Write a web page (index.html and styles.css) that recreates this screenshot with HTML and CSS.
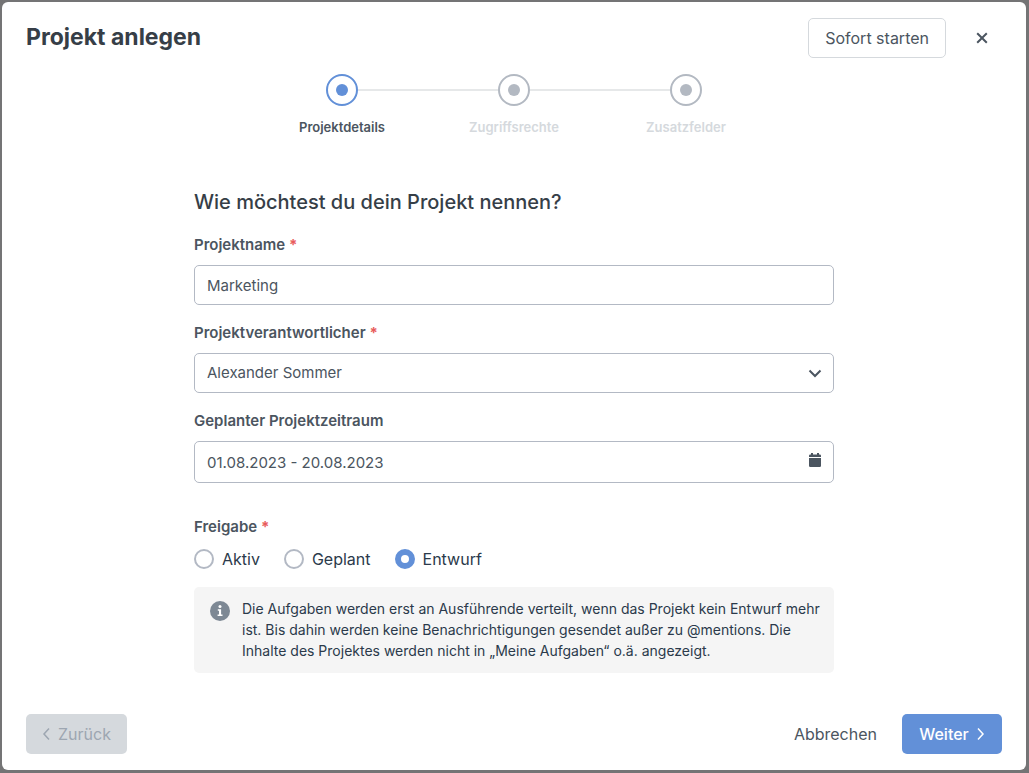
FILE: index.html
```html
<!DOCTYPE html>
<html lang="de">
<head>
    <meta charset="UTF-8">
    <meta name="viewport" content="width=device-width, initial-scale=1.0">
    <title>Projekt anlegen</title>
    <link rel="stylesheet" href="styles.css">
</head>
<body>
    <div class="modal" role="dialog" aria-labelledby="modal-title">
        <header class="modal-header">
            <h1 id="modal-title">Projekt anlegen</h1>
            <button type="button" class="btn btn-outline">Sofort starten</button>
            <button type="button" class="btn btn-close" aria-label="Schließen">
                <svg width="12" height="12" viewBox="0 0 12 12"><path d="M1.200 1.200l9.600 9.600M10.800 1.200l-9.600 9.600"/></svg>
            </button>
        </header>

        <ol class="steps">
            <li class="step active" aria-current="step"><span class="step-dot"></span>Projektdetails</li>
            <li class="step"><span class="step-dot"></span>Zugriffsrechte</li>
            <li class="step"><span class="step-dot"></span>Zusatzfelder</li>
        </ol>

        <form class="project-form" id="project-form">
            <h2>Wie möchtest du dein Projekt nennen?</h2>

            <div class="form-group">
                <label for="project-name">Projektname <span class="required">*</span></label>
                <input type="text" id="project-name" value="Marketing">
            </div>

            <div class="form-group">
                <label for="project-owner">Projektverantwortlicher <span class="required">*</span></label>
                <div class="control">
                    <select id="project-owner">
                        <option selected>Alexander Sommer</option>
                    </select>
                    <svg class="control-icon chevron" width="14" height="14" viewBox="0 0 14 14"><path d="M1.500 4.500L7 10l5.500-5.500"/></svg>
                </div>
            </div>

            <div class="form-group period">
                <label for="project-period">Geplanter Projektzeitraum</label>
                <div class="control">
                    <input type="text" id="project-period" value="01.08.2023 - 20.08.2023">
                    <svg class="control-icon calendar" width="14" height="16" viewBox="0 0 14 16">
                        <path d="M1 5V3.700Q1 2.500 2.200 2.500H3V1h2v1.500h4V1h2v1.500h.8Q13 2.500 13 3.700V5z"/>
                        <path d="M1 6h12v7.800q0 1.200-1.200 1.200H2.200Q1 15 1 13.800z"/>
                    </svg>
                </div>
            </div>

            <fieldset class="release">
                <legend>Freigabe <span class="required">*</span></legend>
                <div class="radios">
                    <label><input type="radio" name="release"> Aktiv</label>
                    <label><input type="radio" name="release"> Geplant</label>
                    <label><input type="radio" name="release" checked> Entwurf</label>
                </div>
            </fieldset>

            <div class="info">
                <svg width="20" height="20" viewBox="0 0 20 20">
                    <circle cx="10" cy="10" r="10" fill="#7d8894"/>
                    <circle cx="10" cy="5.600" r="1.500" fill="#fff"/>
                    <path d="M7.800 8.300h3.300v5.200h1.400V15H7.600v-1.500H9V9.800H7.800z" fill="#fff"/>
                </svg>
                <p>Die Aufgaben werden erst an Ausführende verteilt, wenn das Projekt kein Entwurf mehr ist. Bis dahin werden keine Benachrichtigungen gesendet außer zu @mentions. Die Inhalte des Projektes werden nicht in „Meine Aufgaben“ o.ä. angezeigt.</p>
            </div>
        </form>

        <footer class="modal-footer">
            <button type="button" class="btn btn-back" disabled>
                <svg width="8" height="14" viewBox="0 0 8 14"><path d="M7 1.500L2 7l5 5.500"/></svg>
                Zurück
            </button>
            <button type="button" class="btn btn-cancel">Abbrechen</button>
            <button type="submit" form="project-form" class="btn btn-primary">
                Weiter
                <svg width="8" height="14" viewBox="0 0 8 14"><path d="M1 1.500L6 7l-5 5.500"/></svg>
            </button>
        </footer>
    </div>
</body>
</html>
```

FILE: styles.css
```css
:root {
    --backdrop: #747475;
    --heading-color: #363e47;
    --text-color: #4b5560;
    --dark-color: #2b3a4b;
    --border-color: #b3b9c4;
    --light-color: #d5d9dd;
    --primary-color: #6290d8;
    --danger-color: #e85b5b;
    --font-main: Inter, "Noto Sans", sans-serif;
}
* { box-sizing: border-box; }
body {
    margin: 0;
    padding: 2px 3px 3px 2px;
    min-height: 100vh;
    display: flex;
    background: var(--backdrop);
    color: var(--text-color);
    font-family: var(--font-main);
    font-size: 15px;
    line-height: 20px;
}
button, input, select { font: inherit; color: inherit; }

.modal {
    flex: 1;
    display: flex;
    flex-direction: column;
    padding: 16px 24px;
    background: #fff;
    border-radius: 6px;
}
.modal-header {
    display: flex;
    gap: 16px;
}
h1 {
    flex: 1;
    margin: 0;
    color: var(--heading-color);
    font-size: 23px;
    font-weight: 700;
    line-height: 38px;
}

/* Buttons */
.btn {
    display: flex;
    align-items: center;
    justify-content: center;
    gap: 8px;
    height: 40px;
    padding: 0 16px;
    border: none;
    border-radius: 5px;
    background: none;
    font-size: 16px;
    cursor: pointer;
}
.btn svg, .chevron {
    fill: none;
    stroke: currentColor;
    stroke-width: 2;
}
.btn-outline { border: 1px solid var(--light-color); }
.btn-close {
    width: 40px;
    padding: 0;
}
.modal-footer .btn svg { stroke-width: 1.5; }
.btn-back {
    min-width: 100px;
    margin-right: auto;
    background: var(--light-color);
    color: #9da6b1;
    cursor: default;
}
.btn-primary {
    min-width: 100px;
    background: var(--primary-color);
    color: #fff;
    font-weight: 500;
}

/* Steps */
.steps {
    display: flex;
    justify-content: center;
    margin: 16px 0 53px;
    padding: 0;
    list-style: none;
}
.step {
    flex: 0 1 172px;
    display: flex;
    flex-direction: column;
    align-items: center;
    gap: 11px;
    position: relative;
    color: var(--light-color);
    font-size: 13px;
    font-weight: 600;
}
.step + .step::before {
    content: "";
    position: absolute;
    top: 15px;
    right: calc(50% + 16px);
    width: calc(100% - 32px);
    height: 2px;
    background: #e6e8e9;
}
.step-dot {
    display: flex;
    width: 32px;
    height: 32px;
    padding: 8px;
    border: 2px solid #b3b9c2;
    border-radius: 50%;
}
.step-dot::after {
    content: "";
    flex: 1;
    border-radius: 50%;
    background: #b3b9c2;
}
.step.active { color: var(--text-color); }
.step.active .step-dot { border-color: var(--primary-color); }
.step.active .step-dot::after { background: var(--primary-color); }

/* Form */
.project-form {
    width: 100%;
    max-width: 640px;
    margin: 0 auto;
}
h2 {
    margin: 0 0 21px;
    color: var(--heading-color);
    font-size: 20px;
    font-weight: 500;
    line-height: 24px;
}
.form-group { margin-bottom: 18px; }
.form-group label, legend {
    display: block;
    padding: 0;
    font-weight: 600;
}
.form-group label { margin-bottom: 10px; }
.required {
    color: var(--danger-color);
    font-weight: 700;
}
.control { position: relative; }
.form-group input, .form-group select {
    display: block;
    width: 100%;
    height: 40px;
    padding: 0 12px;
    border: 1px solid var(--border-color);
    border-radius: 5px;
    background: #fff;
    appearance: none;
}
.form-group.period { margin-bottom: 34px; }
.form-group.period input { height: 42px; }
.control-icon {
    position: absolute;
    right: 12px;
    top: 13px;
    pointer-events: none;
}
.calendar {
    top: 11px;
    fill: var(--text-color);
}
.release {
    margin: 0;
    padding: 0;
    border: none;
}
.radios {
    display: flex;
    gap: 24px;
    margin-top: 12px;
    color: var(--dark-color);
    font-size: 16px;
}
.radios label {
    display: flex;
    gap: 8px;
}
.radios input {
    width: 20px;
    height: 20px;
    margin: 0;
    border: 2px solid var(--border-color);
    border-radius: 50%;
    appearance: none;
}
.radios input:checked { border: 6px solid var(--primary-color); }
.info {
    display: flex;
    gap: 12px;
    margin-top: 18px;
    padding: 11px 8px 12px 16px;
    border-radius: 5px;
    background: #f5f5f5;
    color: var(--dark-color);
    font-size: 14px;
    line-height: 21px;
}
.info svg {
    flex: none;
    margin-top: 3px;
}
.info p { margin: 0; }

.modal-footer {
    display: flex;
    gap: 9px;
    margin-top: auto;
    padding-top: 24px;
}
```
